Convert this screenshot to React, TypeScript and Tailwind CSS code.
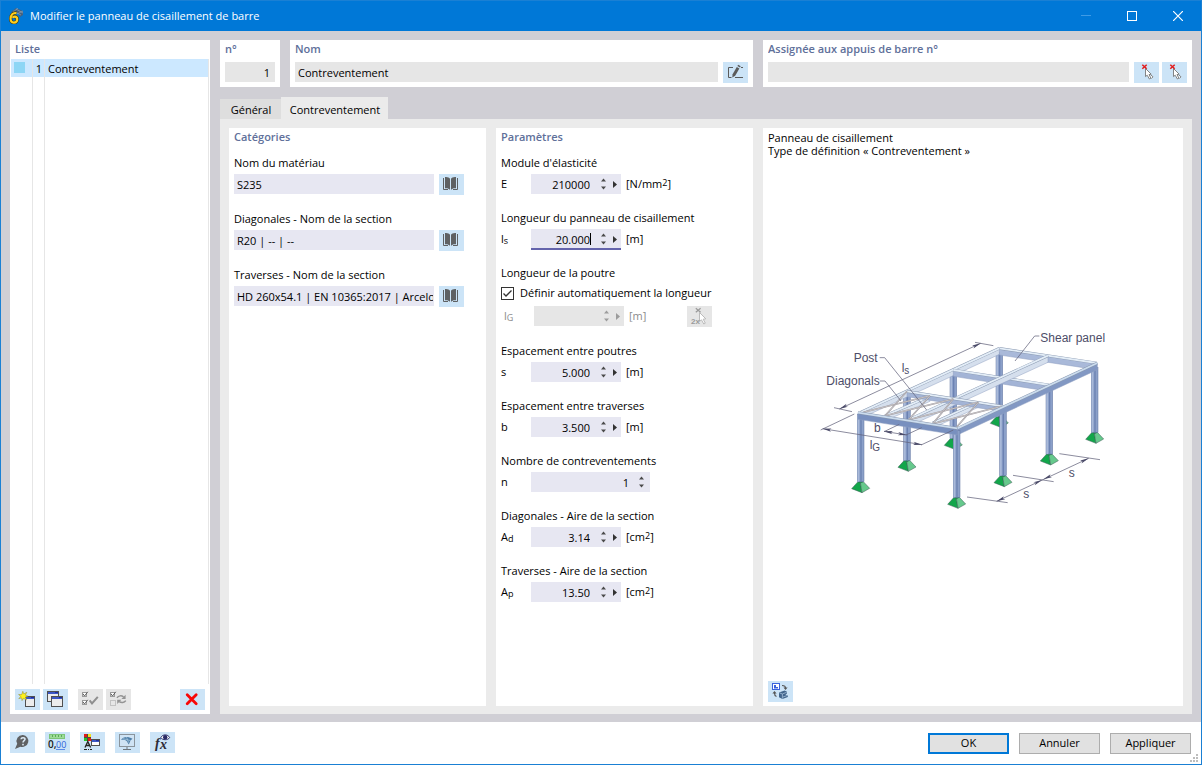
import React from "react";

type Kids = { children?: React.ReactNode };

/* ---------- shared pieces ---------- */

function ToolButton({
  label,
  disabled = false,
  children,
}: Kids & { label: string; disabled?: boolean }) {
  return (
    <button
      type="button"
      aria-label={label}
      disabled={disabled}
      className={
        disabled
          ? "flex h-[21px] w-[25px] shrink-0 items-center justify-center bg-[#e6e6e6]"
          : "flex h-[21px] w-[25px] shrink-0 items-center justify-center bg-[#cce4f7]"
      }
    >
      {children}
    </button>
  );
}

function Heading({ children }: Kids) {
  return (
    <h2 className="h-[18px] truncate text-[11px] leading-[18px] font-semibold text-[#60709a]">
      {children}
    </h2>
  );
}

function Icon({ children, w = 19, h = 17 }: Kids & { w?: number; h?: number }) {
  return (
    <svg width={w} height={h} viewBox={`0 0 ${w} ${h}`} fill="none" aria-hidden="true" className="shrink-0">
      {children}
    </svg>
  );
}

/* ---------- icons ---------- */

function AppIcon() {
  return (
    <Icon w={16} h={16}>
      <path d="M3 4 L8 0 L15 3 L15 7 L12 9 L9 4 Z" fill="#46627f" />
      <path d="M5 3 L13 7 M8 1 L15 5 M4 5 L10 0 M9 6 L15 3" stroke="#93a9bd" strokeWidth="0.6" />
      <path
        d="M8.5 5.2 C5 4.2 2.6 7 2.6 10.6 C2.6 13.4 3.8 14.6 5.8 14.6 C8 14.6 9.2 13 9.2 11.2 C9.2 9.6 8.2 8.6 6.8 8.6 C5.8 8.6 5 9 4.6 9.8"
        stroke="#4a3b05"
        strokeWidth="3.2"
      />
      <path
        d="M8.5 5.2 C5 4.2 2.6 7 2.6 10.6 C2.6 13.4 3.8 14.6 5.8 14.6 C8 14.6 9.2 13 9.2 11.2 C9.2 9.6 8.2 8.6 6.8 8.6 C5.8 8.6 5 9 4.6 9.8"
        stroke="#ffcf1f"
        strokeWidth="2.1"
      />
    </Icon>
  );
}

function EditIcon() {
  return (
    <Icon>
      <path d="M7 3.5H2.5V13.5H5.5M9 13.5H17M15 3.5H17" stroke="#5b5b5b" />
      <path d="M10.8 3 L13.4 4.5 L9.2 11.8 L6.3 13.6 L6.6 10.3 Z" fill="#5b5b5b" />
      <path d="M11.4 2 L12.2 0.8 L14.7 2.2 L14 3.5 Z" fill="#5b5b5b" />
    </Icon>
  );
}

function PickIcon() {
  return (
    <Icon>
      <path d="M8.5 4.5 V12.6 L10.2 11.2 L12.4 15 L13.9 14.2 L12 10.6 L14.2 10.2 Z" fill="#fff" stroke="#777" strokeWidth="0.9" />
      <path d="M13.6 10.8 L16 12.8 L14.3 14.6" fill="#fff" stroke="#777" strokeWidth="0.9" />
      <path d="M5.3 0.7 L9.7 4.7 M9.7 0.7 L5.3 4.7" stroke="#e31b1b" strokeWidth="1.5" />
    </Icon>
  );
}

function PickTwiceIcon() {
  return (
    <Icon w={21} h={19}>
      <path d="M10.5 5.5 V14.5 L12.4 12.8 L14.8 17 L16.3 16.2 L14.2 12.2 L16.8 11.8 Z" fill="#fff" stroke="#b4b4b4" strokeWidth="0.9" />
      <path d="M6.8 1.2 L11.6 5.2 M11.6 1.2 L6.8 5.2" stroke="#9a9a9a" strokeWidth="1.2" />
      <text x="2" y="17" fontSize="8" fontWeight="bold" fill="#9a9a9a" fontFamily="Liberation Sans, sans-serif">2x</text>
    </Icon>
  );
}

function BookIcon() {
  return (
    <Icon>
      <path d="M3 1 C5.4 0.7 7.2 1.4 8 2.8 V14 C7.2 12.6 5.4 12 3 12.2 Z" fill="#5f6163" />
      <path d="M14 1 C11.6 0.7 9.8 1.4 9 2.8 V14 C9.8 12.6 11.6 12 14 12.2 Z" fill="#5f6163" />
      <path d="M1.5 2 V13.5 H6 M15.5 2 V13.5 H11" stroke="#5f6163" />
    </Icon>
  );
}

function WindowShape({ x, y, w, h, pale = false }: { x: number; y: number; w: number; h: number; pale?: boolean }) {
  return (
    <>
      <rect x={x + 0.5} y={y + 0.5} width={w - 1} height={h - 1} fill={pale ? "#fdfdfd" : "#ececec"} stroke="#505050" />
      <rect x={x + 1} y={y + 1} width={w - 2} height="2" fill="#3d57c4" />
      <rect x={x + w - 4} y={y + 1} width="3" height="1" fill="#1f2fa0" />
    </>
  );
}

function NewIcon() {
  return (
    <Icon>
      <WindowShape x={7} y={5} w={10} h={11} />
      <path
        d="M4.8 0.3 L5.8 2.9 L8.8 1.3 L7.4 4.2 L10 5.2 L7.4 6.1 L8.5 8.9 L5.6 7.4 L4 9.6 L3.7 6.9 L0.8 7.6 L2.8 5.4 L0.6 3.5 L3.7 3.6 Z"
        fill="#fff21a"
        stroke="#8a8430"
        strokeWidth="0.5"
      />
    </Icon>
  );
}

function CopyIcon() {
  return (
    <Icon>
      <WindowShape x={1} y={0} w={12} h={11} />
      <WindowShape x={5} y={5} w={12} h={11} />
    </Icon>
  );
}

function CheckAllIcon() {
  return (
    <Icon>
      <rect x="1.5" y="1.5" width="4" height="4" fill="#fff" stroke="#9b9b9b" />
      <rect x="1.5" y="9.5" width="4" height="4" fill="#fff" stroke="#9b9b9b" />
      <path d="M2 2.8 L3.5 5 L6.8 0.8 M2 10.8 L3.5 13 L6.8 8.8" stroke="#5f5f5f" />
      <path d="M8.6 9.4 L11 12.4 L16.8 5.8" stroke="#8f8f8f" strokeWidth="2" />
    </Icon>
  );
}

function InvertIcon() {
  return (
    <Icon>
      <rect x="1.5" y="1.5" width="4" height="4" fill="#fff" stroke="#9b9b9b" />
      <rect x="1.5" y="9.5" width="5" height="5" stroke="#c2c2c2" />
      <path d="M2 2.8 L3.5 5 L6.8 0.8" stroke="#5f5f5f" />
      <path d="M8 6.8 C9.5 4.4 12.5 4.4 14.6 5.8 M16.8 9.6 C15.2 12 12.2 12 10.2 10.6" stroke="#939393" strokeWidth="1.5" />
      <path d="M16.6 3.8 V8 H12.4 Z M8.2 13 V8.8 H12.4 Z" fill="#939393" />
    </Icon>
  );
}

function DeleteIcon() {
  return (
    <Icon>
      <path d="M4.2 3.8 L13.2 12.8 M13.2 3.8 L4.2 12.8" stroke="#f80808" strokeWidth="2.8" strokeLinecap="round" />
    </Icon>
  );
}

function HelpIcon() {
  return (
    <Icon>
      <path d="M10 1 A6.2 6 0 1 1 7.4 12.7 L2 15 L4.2 9.8 A6.2 6 0 0 1 10 1 Z" fill="#5f6163" />
      <path d="M8 5.2 C8.2 3 12.3 3.2 12 5.4 C11.8 6.7 10 6.8 10 8.6" stroke="#dcebf7" strokeWidth="1.5" />
      <rect x="9.2" y="9.8" width="1.6" height="1.6" fill="#dcebf7" />
    </Icon>
  );
}

function UnitsIcon() {
  return (
    <Icon w={21} h={19}>
      <rect x="2.5" y="1.5" width="15" height="4" fill="#9ddb97" stroke="#7cc578" />
      <path d="M5.5 2V4M8.5 2V4M11.5 2V4M14.5 2V4" stroke="#5aab58" />
      <text x="1" y="15" fontSize="10" fontWeight="600" fill="#1a1a1a" fontFamily="Open Sans, sans-serif">0,</text>
      <text x="9" y="15" fontSize="9" fill="#2e62d9" fontFamily="Open Sans, sans-serif">00</text>
      <path d="M9 16.5H18" stroke="#5c8ae6" />
    </Icon>
  );
}

function DisplayIcon() {
  return (
    <Icon>
      <rect x="1" y="0" width="7" height="7" fill="#4d4d3c" />
      <rect x="1" y="0" width="3" height="3" fill="#e01b1b" />
      <rect x="5" y="0" width="3" height="3" fill="#f4e21c" />
      <rect x="1" y="4" width="3" height="3" fill="#25c52c" />
      <rect x="5" y="4" width="3" height="3" fill="#e01b1b" />
      <path d="M2 13.5 L4.8 7.5 L7.6 13.5 M3 11.5 H6.6" stroke="#222" strokeWidth="1.3" />
      <path d="M1 15.5 H4 M5 15.5 H6 M7 15.5 H9" stroke="#222" />
      <WindowShape x={8} y={5} w={9} h={7} pale />
    </Icon>
  );
}

function ScreenIcon() {
  return (
    <Icon>
      <rect x="1.5" y="0.5" width="15" height="12" fill="#cfe3f4" stroke="#8a949c" />
      <path d="M9 13 V15 M5 15.5 H13" stroke="#6d757c" />
      <path d="M3 6 C5 3 9 1.5 14.5 4.8 L12.5 6.6 L10.8 10.6 L8.6 7 C7 5.4 5 5.4 3 6 Z" fill="#4f7fa8" />
      <path d="M5 4.6 L12.5 6.6 M8.5 3 L10.6 8.6" stroke="#a9c8e0" strokeWidth="0.7" />
    </Icon>
  );
}

function FormulaIcon() {
  return (
    <Icon w={21} h={19}>
      <text x="3" y="15" fontSize="14" fontStyle="italic" fontWeight="bold" fill="#2b2b38" fontFamily="Liberation Serif, serif">f</text>
      <text x="8" y="16" fontSize="14" fontStyle="italic" fontWeight="bold" fill="#2b2b38" fontFamily="Liberation Serif, serif">x</text>
      <path d="M8.8 4.6 C10.5 1 16 1 17.6 4.6 C16 7.4 10.5 7.4 8.8 4.6 Z" fill="#fff" stroke="#2a2a66" />
      <circle cx="13.2" cy="4.2" r="2.2" fill="#2a2a66" />
    </Icon>
  );
}

function ViewIcon() {
  return (
    <Icon>
      <rect x="1.5" y="0.5" width="7" height="6" fill="#fff" stroke="#3a63dc" />
      <path d="M3 2 V5.5 H7 V4 H5 V2 Z" fill="#3a63dc" />
      <path d="M11 2.5 C13.5 2.5 14.5 3 14.5 5 M5.5 13.5 C4 13 3.5 12 3.5 10" stroke="#555" strokeWidth="1.2" />
      <path d="M12.5 4.4 H16.6 L14.5 7 Z M1.4 10.6 L3.5 8 L5.6 10.6 Z" fill="#555" />
      <path d="M8 9.4 L13.6 7.4 L16 8.8 V10.6 L14.4 11.4 L16.8 12.4 V14 L11.4 16 L8 14.2 Z" fill="#42668d" />
      <path d="M8.4 9.8 L11.4 11 L15.8 9.2 M11.4 11 V15.6 M12 14 L16.4 12.4" stroke="#a5c0da" strokeWidth="0.8" />
    </Icon>
  );
}

/* ---------- numeric field ---------- */

function Stepper({ dim = false }: { dim?: boolean }) {
  const color = dim ? "#9c9c9c" : "#4a4a4a";
  return (
    <span className="flex w-3 shrink-0 flex-col items-center justify-center gap-1">
      <button type="button" disabled={dim} aria-label="Augmenter" className="flex h-1 w-[5px]">
        <svg width="5" height="4" viewBox="0 0 5 4" aria-hidden="true">
          <path d="M0 3.5 L2.5 0.5 L5 3.5 Z" fill={color} />
        </svg>
      </button>
      <button type="button" disabled={dim} aria-label="Diminuer" className="flex h-1 w-[5px]">
        <svg width="5" height="4" viewBox="0 0 5 4" aria-hidden="true">
          <path d="M0 0.5 L2.5 3.5 L5 0.5 Z" fill={color} />
        </svg>
      </button>
    </span>
  );
}

function MoreButton({ dim = false }: { dim?: boolean }) {
  return (
    <button type="button" disabled={dim} aria-label="Options" className="flex w-3 shrink-0 items-center justify-center">
      <svg width="4" height="7" viewBox="0 0 4 7" aria-hidden="true">
        <path d="M0 0 L4 3.5 L0 7 Z" fill={dim ? "#9c9c9c" : "#333"} />
      </svg>
    </button>
  );
}

type ParamProps = {
  id: string;
  label: string;
  symbol: string;
  sub?: string;
  value: string;
  unit?: React.ReactNode;
  active?: boolean;
};

function Sub({ children }: Kids) {
  return <span className="relative top-px text-[9px]">{children}</span>;
}

function Sup({ children }: Kids) {
  return <span className="relative -top-0.5 text-[9px]">{children}</span>;
}

function Param({ id, label, symbol, sub, value, unit, active = false }: ParamProps) {
  return (
    <div>
      <label htmlFor={id} className="block h-4 leading-4">
        {label}
      </label>
      <div className="mt-[3px] flex h-5 items-center">
        <span className="w-[30px] shrink-0 leading-5">
          {symbol}
          {sub && <Sub>{sub}</Sub>}
        </span>
        <div
          className={
            unit
              ? active
                ? "flex h-5 w-[90px] bg-[#e7e7f2] shadow-[0_1px_0_#6464ac,inset_0_-1px_0_#6464ac]"
                : "flex h-5 w-[90px] bg-[#e7e7f2]"
              : "flex h-5 w-[119px] bg-[#e7e7f2] pr-[3px]"
          }
        >
          <input
            id={id}
            type="text"
            defaultValue={value}
            className={
              unit
                ? "h-5 w-[59px] min-w-0 bg-transparent pt-px text-right outline-none"
                : "h-5 min-w-0 flex-1 bg-transparent pt-px pr-1.5 text-right outline-none"
            }
          />
          {unit && <span className={active ? "my-1 w-px bg-black" : "w-px"} />}
          <span className={unit ? "ml-1.5 flex" : "flex"}>
            <Stepper />
            {unit && <MoreButton />}
          </span>
        </div>
        {unit && <span className="ml-[5px] leading-5">{unit}</span>}
      </div>
    </div>
  );
}

function Category({ id, label, value }: { id: string; label: string; value: string }) {
  return (
    <div>
      <label htmlFor={id} className="block h-4 leading-4">
        {label}
      </label>
      <div className="mt-[3px] flex items-start gap-[5px]">
        <input
          id={id}
          type="text"
          defaultValue={value}
          className="h-5 w-[200px] min-w-0 bg-[#e7e7f2] pt-px pr-px pl-[3px] outline-none"
        />
        <ToolButton label={`Bibliothèque : ${label}`}>
          <BookIcon />
        </ToolButton>
      </div>
    </div>
  );
}

/* ---------- structural sketch ---------- */

type P = [number, number];
const pts = (list: P[]) => list.map((p) => p.join(",")).join(" ");

function Foot({ x, y }: { x: number; y: number }) {
  return (
    <g stroke="#3c5a56" strokeWidth="1.5" strokeLinejoin="round">
      <polygon points={pts([[x - 8, y], [x - 27, y + 21], [x + 4, y + 33], [x - 1, y + 2]])} fill="#12a64a" />
      <polygon points={pts([[x - 1, y + 2], [x + 8, y], [x + 27, y + 20], [x + 4, y + 33]])} fill="#66c98c" />
      <polygon points={pts([[x - 8, y], [x, y - 3], [x + 8, y], [x, y + 4]])} fill="#12a64a" />
    </g>
  );
}

function Column({ x, y1, y2 }: { x: number; y1: number; y2: number }) {
  return (
    <g>
      <rect x={x - 10} y={y1} width="20" height={y2 - y1} fill="#8ba0c9" stroke="#61759f" strokeWidth="1.5" />
      <rect x={x - 9} y={y1} width="5" height={y2 - y1} fill="#a9b9d9" />
      <rect x={x - 1} y={y1} width="4" height={y2 - y1} fill="#6c82b2" />
    </g>
  );
}

function Beam({
  a,
  b,
  depth = 14,
  face = "#b7c4dd",
  top = "#e3edf7",
}: {
  a: P;
  b: P;
  depth?: number;
  face?: string;
  top?: string;
}) {
  return (
    <g>
      <polygon
        points={pts([a, b, [b[0], b[1] + depth], [a[0], a[1] + depth]])}
        fill={face}
        stroke="#8f9fc0"
        strokeWidth="1.5"
      />
      <line x1={a[0]} y1={a[1]} x2={b[0]} y2={b[1]} stroke="#8796ae" strokeWidth="8" />
      <line x1={a[0]} y1={a[1]} x2={b[0]} y2={b[1]} stroke={top} strokeWidth="5.5" />
    </g>
  );
}

function Arrow({ x, y, angle }: { x: number; y: number; angle: number }) {
  return <path d="M0 0 L-26 -5 L-20 0 L-26 5 Z" fill="#4b4b69" transform={`translate(${x} ${y}) rotate(${angle})`} />;
}

const DIAGONALS: [P, P][] = [
  [[160, 280], [360, 230]],
  [[225, 290], [291, 217]],
  [[225, 290], [430, 240]],
  [[296, 302], [360, 230]],
  [[296, 302], [505, 250]],
  [[368, 314], [430, 240]],
  [[368, 314], [575, 262]],
  [[440, 324], [505, 250]],
];

function StructureSketch() {
  return (
    <svg width="310" height="200" viewBox="24 0 930 600" role="img" aria-label="Panneau de cisaillement" className="max-w-full">
      <Foot x={568} y={292} />
      <Foot x={430} y={358} />
      <Foot x={291} y={424} />
      <Column x={568} y1={100} y2={292} />
      <Column x={430} y1={160} y2={358} />
      <Column x={291} y1={225} y2={424} />

      <Beam a={[568, 88]} b={[860, 132]} depth={20} face="#a9b9d9" />
      <Beam a={[152, 280]} b={[568, 88]} depth={18} face="#d5dfed" />
      <Beam a={[430, 153]} b={[718, 198]} depth={19} face="#a3b4d6" />
      <Beam a={[360, 232]} b={[225, 290]} depth={15} face="#dbe4f0" />
      <Beam a={[714, 110]} b={[296, 302]} depth={20} face="#d5dfed" />
      <Beam a={[505, 250]} b={[368, 312]} depth={15} face="#dbe4f0" />
      <Beam a={[291, 217]} b={[579, 262]} depth={16} face="#a3b4d6" />
      {DIAGONALS.map(([a, b], i) => (
        <g key={i}>
          <line x1={a[0]} y1={a[1]} x2={b[0]} y2={b[1]} stroke="#98949a" strokeWidth="4.5" />
          <line x1={a[0]} y1={a[1]} x2={b[0]} y2={b[1]} stroke="#dedbdb" strokeWidth="2" />
        </g>
      ))}

      <Foot x={854} y={340} />
      <Foot x={718} y={405} />
      <Foot x={579} y={470} />
      <Column x={854} y1={145} y2={340} />
      <Column x={718} y1={205} y2={405} />
      <Column x={579} y1={268} y2={470} />
      <Beam a={[442, 328]} b={[862, 132]} depth={20} face="#8298c3" top="#cbdcee" />
      <Foot x={152} y={488} />
      <Foot x={440} y={535} />
      <Column x={152} y1={286} y2={488} />
      <Column x={440} y1={334} y2={535} />
      <Beam a={[144, 281]} b={[442, 328]} depth={20} face="#7890bf" top="#cbdcee" />

      <g stroke="#62627a" strokeWidth="2.2" fill="none">
        <path d="M72 266 L126 278 M495 70 L550 80 M88 270 L512 73" />
        <path d="M133 285 L32 333 M430 333 L333 378 M38 329 L336 377" />
        <path d="M222 338 L268 316 M288 348 L335 326 M222 337 L290 348" />
        <path d="M471 534 L593 551 M609 469 L731 488 M748 404 L870 422" />
        <path d="M560 547 L836 418" />
        <path d="M209 116 H224 L350 273 M209 186 H225 L273 246 M688 51 H674 L615 126" />
      </g>
      <Arrow x={88} y={270} angle={155} />
      <Arrow x={512} y={73} angle={-25} />
      <Arrow x={38} y={329} angle={189} />
      <Arrow x={336} y={377} angle={9} />
      <Arrow x={222} y={337} angle={189} />
      <Arrow x={290} y={348} angle={9} />
      <Arrow x={560} y={547} angle={155} />
      <Arrow x={696} y={483} angle={-25} />
      <Arrow x={700} y={481} angle={155} />
      <Arrow x={836} y={418} angle={-25} />

      <g fill="#4d4d68" fontFamily="Liberation Sans, Arial, sans-serif" fontSize="36">
        <text x="131" y="128">Post</text>
        <text x="49" y="198">Diagonals</text>
        <text x="691" y="68">Shear panel</text>
        <text x="275" y="158">l<tspan fontSize="30" dy="6">s</tspan></text>
        <text x="192" y="339">b</text>
        <text x="179" y="390">l<tspan fontSize="30" dy="7">G</tspan></text>
        <text x="640" y="538">s</text>
        <text x="776" y="475">s</text>
      </g>
    </svg>
  );
}

/* ---------- page ---------- */

export default function App() {
  return (
    <div className="flex min-h-screen flex-col border border-[#1a80d4] bg-white font-['Open_Sans','Noto_Sans',sans-serif] text-[11px] text-black">
      <header className="flex h-[30px] shrink-0 items-center bg-[#0078d7] pl-[7px] text-white">
        <AppIcon />
        <h1 className="ml-1.5 flex-1 truncate text-[11px] leading-[30px]">Modifier le panneau de cisaillement de barre</h1>
        <button type="button" aria-label="Réduire" disabled className="flex h-full w-[46px] items-center justify-center">
          <Icon w={10} h={10}>
            <path d="M0 4.5H10" stroke="#3f9be6" />
          </Icon>
        </button>
        <button type="button" aria-label="Agrandir" className="flex h-full w-[46px] items-center justify-center">
          <Icon w={10} h={10}>
            <rect x="0.5" y="0.5" width="9" height="9" stroke="#fff" />
          </Icon>
        </button>
        <button type="button" aria-label="Fermer" className="flex h-full w-[46px] items-center justify-center">
          <Icon w={10} h={10}>
            <path d="M0 0 L10 10 M10 0 L0 10" stroke="#fff" strokeWidth="1.2" />
          </Icon>
        </button>
      </header>

      <main className="flex flex-1 gap-2.5 bg-[#d0cfd5] px-[9px] pt-[9px] pb-2">
        <section className="flex w-[200px] shrink-0 flex-col bg-white">
          <div className="pl-[5px]">
            <Heading>Liste</Heading>
          </div>
          <div className="mx-px mt-px flex flex-1 border-r border-[#e6e6e6]">
            <ul className="flex w-full">
              <li className="flex w-full">
                <button type="button" className="flex w-full text-left leading-[18px]">
                  <span className="flex w-[22px] self-stretch border-r border-[#e6e6e6]">
                    <span className="h-[18px] flex-1 bg-[#cce8ff] pt-[3px] pl-[3px]">
                      <span className="block h-[11px] w-[11px] bg-[#8dd6f5]" />
                    </span>
                  </span>
                  <span className="w-3 self-stretch border-r border-[#e6e6e6]">
                    <span className="block h-[18px] bg-[#cce8ff] pt-px pr-0.5 text-right">1</span>
                  </span>
                  <span className="h-[18px] flex-1 bg-[#cce8ff] pt-px pl-[3px]">Contreventement</span>
                </button>
              </li>
            </ul>
          </div>
          <div className="flex px-[5px] pt-[5px] pb-1">
            <div className="flex gap-[3px]">
              <ToolButton label="Nouveau"><NewIcon /></ToolButton>
              <ToolButton label="Copier"><CopyIcon /></ToolButton>
            </div>
            <div className="ml-2.5 flex gap-[3px]">
              <ToolButton label="Tout sélectionner" disabled><CheckAllIcon /></ToolButton>
              <ToolButton label="Inverser la sélection" disabled><InvertIcon /></ToolButton>
            </div>
            <div className="ml-auto">
              <ToolButton label="Supprimer"><DeleteIcon /></ToolButton>
            </div>
          </div>
        </section>

        <div className="flex min-w-0 flex-1 flex-col">
          <div className="grid grid-cols-[60px_minmax(0,463fr)_minmax(0,429fr)] gap-2.5">
            <section className="bg-white px-[5px] pb-1">
              <Heading>n°</Heading>
              <input
                type="text"
                aria-label="n°"
                readOnly
                defaultValue="1"
                className="mt-1 block h-5 w-full bg-[#e6e6e6] px-[5px] pt-px text-right outline-none"
              />
            </section>
            <section className="bg-white px-[5px] pb-1">
              <Heading>Nom</Heading>
              <div className="mt-1 flex gap-[5px]">
                <input
                  type="text"
                  aria-label="Nom"
                  readOnly
                  defaultValue="Contreventement"
                  className="h-5 min-w-0 flex-1 bg-[#e6e6e6] px-[3px] pt-px outline-none"
                />
                <ToolButton label="Modifier le nom"><EditIcon /></ToolButton>
              </div>
            </section>
            <section className="bg-white px-[5px] pb-1">
              <Heading>Assignée aux appuis de barre n°</Heading>
              <div className="mt-1 flex gap-[3px]">
                <input
                  type="text"
                  aria-label="Assignée aux appuis de barre n°"
                  readOnly
                  className="mr-0.5 h-5 min-w-0 flex-1 bg-[#e6e6e6] px-[3px] outline-none"
                />
                <ToolButton label="Sélectionner"><PickIcon /></ToolButton>
                <ToolButton label="Désélectionner"><PickIcon /></ToolButton>
              </div>
            </section>
          </div>

          <div role="tablist" className="mt-2.5 flex h-[22px] items-end">
            <button type="button" role="tab" aria-selected="false" className="h-5 w-[61px] bg-[#dedede] pt-0.5 pl-px">
              Général
            </button>
            <button type="button" role="tab" aria-selected="true" className="h-[22px] w-[107px] bg-[#ebebeb] pt-1 pl-px">
              Contreventement
            </button>
          </div>

          <div className="grid flex-1 grid-cols-[minmax(0,257fr)_minmax(0,257fr)_minmax(0,420fr)] gap-2.5 bg-[#ebebeb] p-[9px] pb-2">
            <section className="flex min-w-0 flex-col bg-white px-[5px]">
              <Heading>Catégories</Heading>
              <div className="mt-[9px] flex flex-col gap-4">
                <Category id="materiau" label="Nom du matériau" value="S235" />
                <Category id="diagonales" label="Diagonales - Nom de la section" value="R20 | -- | --" />
                <Category
                  id="traverses"
                  label="Traverses - Nom de la section"
                  value="HD 260x54.1 | EN 10365:2017 | ArcelorMittal"
                />
              </div>
            </section>

            <section className="flex min-w-0 flex-col bg-white px-[5px]">
              <Heading>Paramètres</Heading>
              <div className="mt-[9px] flex flex-col gap-4">
                <Param id="e" label="Module d'élasticité" symbol="E" value="210000" unit={<>[N/mm<Sup>2</Sup>]</>} />
                <Param id="ls" label="Longueur du panneau de cisaillement" symbol="l" sub="s" value="20.000" unit="[m]" active />
                <div>
                  <div className="h-4 leading-4">Longueur de la poutre</div>
                  <div className="mt-1 flex h-4 items-center">
                    <span className="grid h-[13px] w-[13px] place-items-center">
                      <input
                        id="auto"
                        type="checkbox"
                        defaultChecked
                        className="peer col-start-1 row-start-1 h-[13px] w-[13px] appearance-none border border-[#333] bg-white"
                      />
                      <svg
                        width="11"
                        height="11"
                        viewBox="0 0 11 11"
                        fill="none"
                        aria-hidden="true"
                        className="pointer-events-none invisible col-start-1 row-start-1 peer-checked:visible"
                      >
                        <path d="M1.5 5.5 L4 8 L9.5 2.5" stroke="#333" strokeWidth="1.3" />
                      </svg>
                    </span>
                    <label htmlFor="auto" className="ml-1.5 leading-4">
                      Définir automatiquement la longueur
                    </label>
                  </div>
                  <div className="mt-[5px] flex items-start text-[#8c8c8c]">
                    <label htmlFor="lg" className="w-[33px] pl-[3px] leading-5">
                      l<Sub>G</Sub>
                    </label>
                    <div className="flex h-5 w-[90px] bg-[#e6e6e6]">
                      <input id="lg" type="text" disabled className="h-5 w-[66px] min-w-0 bg-transparent" />
                      <Stepper dim />
                      <MoreButton dim />
                    </div>
                    <span className="ml-[5px] leading-5">[m]</span>
                    <span className="mr-9 ml-auto">
                      <ToolButton label="Sélectionner deux nœuds" disabled>
                        <PickTwiceIcon />
                      </ToolButton>
                    </span>
                  </div>
                </div>
                <Param id="s" label="Espacement entre poutres" symbol="s" value="5.000" unit="[m]" />
                <Param id="b" label="Espacement entre traverses" symbol="b" value="3.500" unit="[m]" />
                <Param id="n" label="Nombre de contreventements" symbol="n" value="1" />
                <Param id="ad" label="Diagonales - Aire de la section" symbol="A" sub="d" value="3.14" unit={<>[cm<Sup>2</Sup>]</>} />
                <Param id="ap" label="Traverses - Aire de la section" symbol="A" sub="p" value="13.50" unit={<>[cm<Sup>2</Sup>]</>} />
              </div>
            </section>

            <section className="flex min-w-0 flex-col bg-white px-[5px] pt-[3px] pb-1">
              <p className="leading-[13px]">
                Panneau de cisaillement
                <br />
                Type de définition « Contreventement »
              </p>
              <div className="flex flex-1 items-center justify-center">
                <StructureSketch />
              </div>
              <ToolButton label="Changer la vue"><ViewIcon /></ToolButton>
            </section>
          </div>
        </div>
      </main>

      <footer className="relative flex h-[42px] shrink-0 items-start bg-white pt-2.5 pr-2.5 pl-[9px]">
        <div className="flex flex-1 gap-2.5">
          <ToolButton label="Aide"><HelpIcon /></ToolButton>
          <ToolButton label="Unités et décimales"><UnitsIcon /></ToolButton>
          <ToolButton label="Affichage"><DisplayIcon /></ToolButton>
          <ToolButton label="Rendu"><ScreenIcon /></ToolButton>
          <ToolButton label="Formule"><FormulaIcon /></ToolButton>
        </div>
        <div className="flex gap-2.5 pt-px">
          <button type="button" className="h-[21px] w-[81px] border-2 border-[#0078d7] bg-[#e1e1e1]">OK</button>
          <button type="button" className="h-[21px] w-[81px] border border-[#adadad] bg-[#e1e1e1]">Annuler</button>
          <button type="button" className="h-[21px] w-[81px] border border-[#adadad] bg-[#e1e1e1]">Appliquer</button>
        </div>
        <svg width="8" height="8" viewBox="0 0 8 8" aria-hidden="true" className="absolute right-[3px] bottom-0.5">
          <path d="M6 0h2v2H6z M3 3h2v2H3z M6 3h2v2H6z M0 6h2v2H0z M3 6h2v2H3z M6 6h2v2H6z" fill="#bdbdbd" />
        </svg>
      </footer>
    </div>
  );
}
